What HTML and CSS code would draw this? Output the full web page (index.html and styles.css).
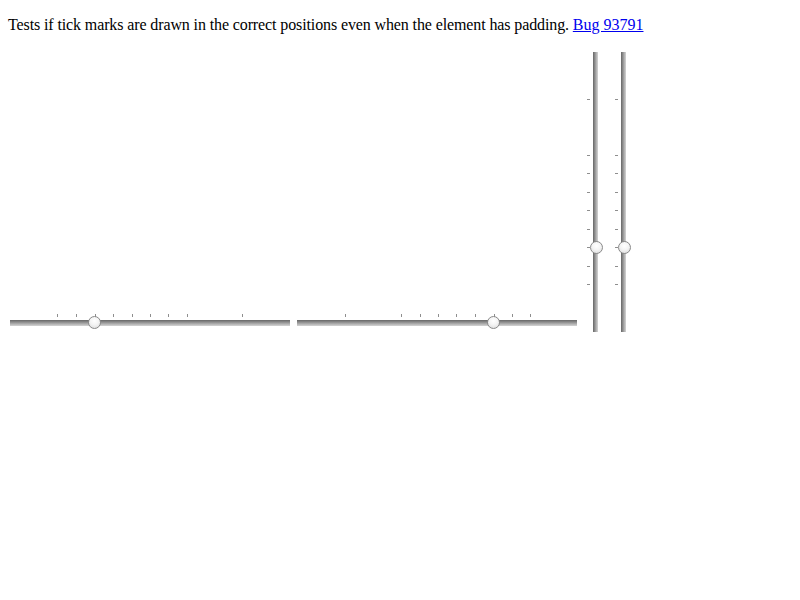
FILE: index.html
```html
<!DOCTYPE html>
<html>
<head>
<meta charset="utf-8">
<link rel="stylesheet" href="styles.css">
</head>
<body>
<p class="intro">Tests if tick marks are drawn in the correct positions even when the element has padding. <a href="#">Bug 93791</a></p>
<div class="row">
  <div class="hslider first">
    <div class="track"></div>
    <span class="tick" style="left:47px"></span>
    <span class="tick" style="left:66px"></span>
    <span class="tick" style="left:85px"></span>
    <span class="tick" style="left:103px"></span>
    <span class="tick" style="left:122px"></span>
    <span class="tick" style="left:140px"></span>
    <span class="tick" style="left:158px"></span>
    <span class="tick" style="left:177px"></span>
    <span class="tick" style="left:232px"></span>
    <span class="thumb" style="left:78px"></span>
  </div>
  <div class="hslider second">
    <div class="track"></div>
    <span class="tick" style="left:48px"></span>
    <span class="tick" style="left:104px"></span>
    <span class="tick" style="left:123px"></span>
    <span class="tick" style="left:141px"></span>
    <span class="tick" style="left:159px"></span>
    <span class="tick" style="left:178px"></span>
    <span class="tick" style="left:197px"></span>
    <span class="tick" style="left:215px"></span>
    <span class="tick" style="left:233px"></span>
    <span class="thumb" style="left:190px"></span>
  </div>
  <div class="vslider">
    <div class="track"></div>
    <span class="tick" style="top:47px"></span>
    <span class="tick" style="top:103px"></span>
    <span class="tick" style="top:121px"></span>
    <span class="tick" style="top:140px"></span>
    <span class="tick" style="top:158px"></span>
    <span class="tick" style="top:177px"></span>
    <span class="tick" style="top:195px"></span>
    <span class="tick" style="top:214px"></span>
    <span class="tick" style="top:232px"></span>
    <span class="thumb" style="top:189px"></span>
  </div>
  <div class="vslider">
    <div class="track"></div>
    <span class="tick" style="top:47px"></span>
    <span class="tick" style="top:103px"></span>
    <span class="tick" style="top:121px"></span>
    <span class="tick" style="top:140px"></span>
    <span class="tick" style="top:158px"></span>
    <span class="tick" style="top:177px"></span>
    <span class="tick" style="top:195px"></span>
    <span class="tick" style="top:214px"></span>
    <span class="tick" style="top:232px"></span>
    <span class="thumb" style="top:189px"></span>
  </div>
</div>
</body>
</html>
```
FILE: styles.css
```css
html, body {
  background: #ffffff;
}
body {
  margin: 0;
  padding: 8px;
  font-family: "Liberation Serif", "Times New Roman", serif;
  font-size: 16px;
  color: #000;
}
.intro {
  margin: 8px 0 16px 0;
  line-height: 18px;
  letter-spacing: -0.115px;
}
.intro a {
  color: #0000ee;
  text-decoration: underline;
  letter-spacing: 0;
}
.row {
  display: flex;
  align-items: flex-end;
  padding-top: 2px;
  padding-left: 2px;
}
.hslider {
  position: relative;
  width: 280px;
  height: 22px;
  flex: none;
}
.hslider.second {
  margin-left: 7px;
}
.hslider .track {
  margin-top: 10px;
  height: 6px;
  background: linear-gradient(to bottom, #666666 0%, #8c8c8c 35%, #b4b4b4 70%, #d4d4d4 100%);
}
.hslider .tick {
  position: absolute;
  top: 4px;
  width: 1px;
  height: 3px;
  background: #8e8e8e;
}
.hslider .thumb {
  top: 6px;
}
.thumb {
  position: absolute;
  width: 11px;
  height: 11px;
  border: 1px solid #8a8a8a;
  border-radius: 50%;
  background: radial-gradient(circle at 50% 35%, #ffffff 0%, #f4f4f4 45%, #d8d8d8 100%);
}
.vslider {
  position: relative;
  width: 20px;
  height: 280px;
  margin-left: 8px;
  flex: none;
}
.vslider .track {
  margin-left: 8px;
  width: 5px;
  height: 280px;
  background: linear-gradient(to right, #666666 0%, #8c8c8c 35%, #b4b4b4 70%, #d4d4d4 100%);
}
.vslider .tick {
  position: absolute;
  left: 2px;
  width: 3px;
  height: 1px;
  background: #8e8e8e;
}
.vslider .thumb {
  left: 5px;
}
```
